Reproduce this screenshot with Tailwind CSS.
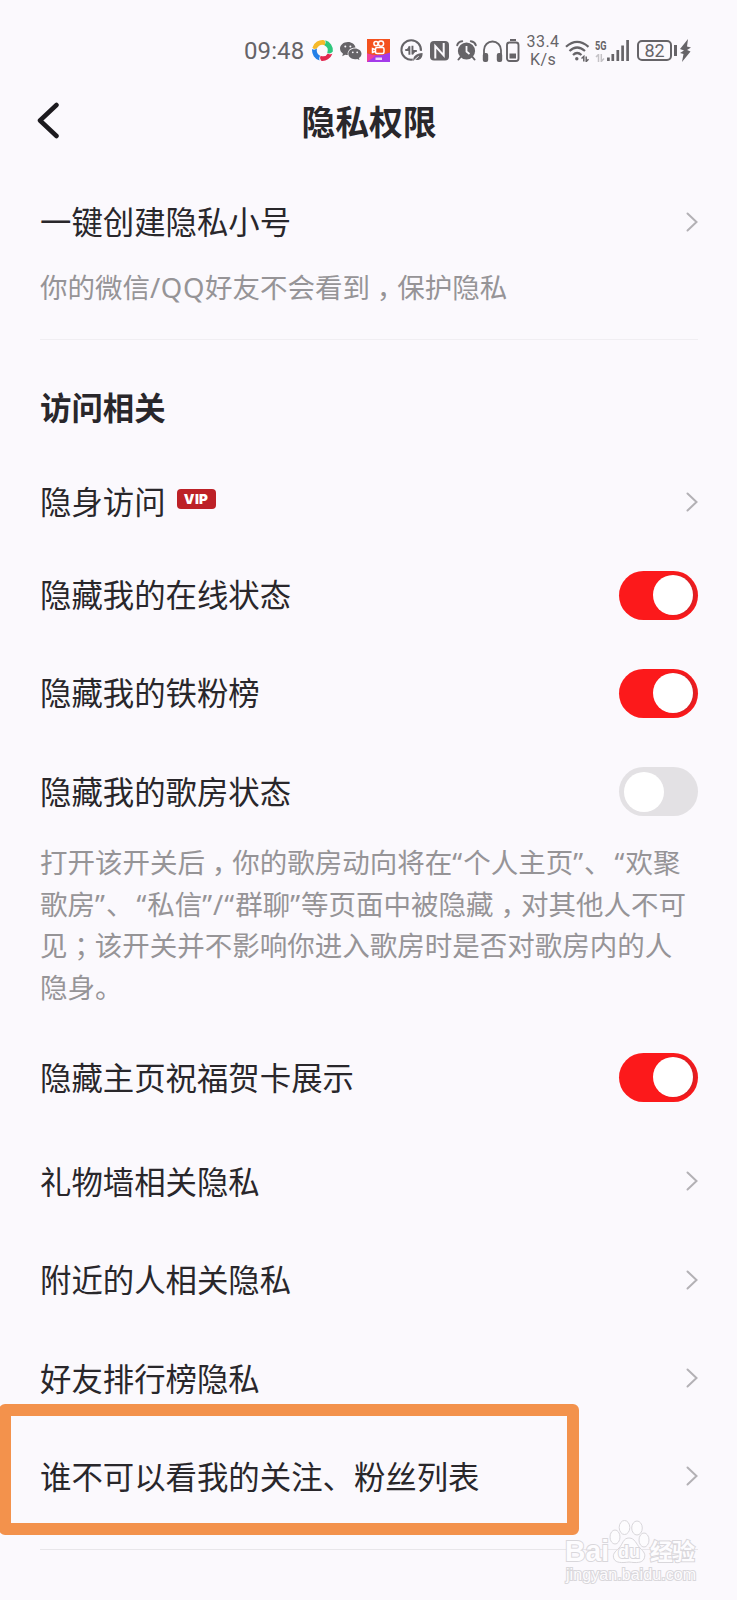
<!DOCTYPE html>
<html lang="zh-CN">
<head>
    <meta charset="UTF-8">
    <meta name="viewport" content="width=device-width, initial-scale=1.0">
    <title>隐私权限</title>
    <script src="https://cdn.jsdelivr.net/npm/@tailwindcss/browser@4"></script>
</head>
<body class="bg-[#fbf9fd]">
    <div class="relative w-[737px] h-[1600px] overflow-hidden bg-[#fbf9fd] text-[#29272b] font-['Noto_Sans','Noto_Sans_CJK_SC',sans-serif] whitespace-nowrap">
        <!-- Status bar -->
        <div class="flex items-center h-[101px] pl-[244px] text-[#666468] font-[Roboto,sans-serif]">
            <span class="w-[67px] text-[24px] leading-6 tracking-[0.1px]">09:48</span>
            <svg class="w-[23px] h-[23px] shrink-0" viewBox="0 0 24 24">
                <path d="M1.500 9A11 11 0 0 1 14 1.200Q15.500 4 14.500 6.500Q9 4.500 6 10Q3 11 1.500 9z" fill="#f5b92a"/>
                <path d="M15 1.400A11 11 0 0 1 22.800 13Q20 16 17 14.500Q19 9 14 6.500Q16 4 15 1.400z" fill="#2fc77d"/>
                <path d="M22.300 15.500A11 11 0 0 1 10.500 22.800Q8.500 20 10 17.500Q15 19.500 17.500 15Q20 16.500 22.300 15.500z" fill="#e2284f"/>
                <path d="M9 22.500A11 11 0 0 1 1.200 10.500Q3.500 12 6.300 10Q5 15 9.500 17.500Q8 20 9 22.500z" fill="#2380e8"/>
            </svg>
            <svg class="w-[22px] h-[18px] ml-[6px] shrink-0" viewBox="0 0 22 18" fill="currentColor">
                <path d="M8 0C3.500 0 0 2.900 0 6.600c0 2.100 1.200 3.900 3 5.100l-.8 2.500 3-1.500c.9.2 1.700.3 2.600.3C7 9 10 5.600 15.500 5.500 14.800 2.300 11.800 0 8 0z"/>
                <path d="M15 6.400c-3.800 0-6.700 2.400-6.700 5.400s2.900 5.400 6.700 5.400c.8 0 1.500-.1 2.200-.3l2.300 1.100-.6-1.900c1.600-1 2.600-2.500 2.600-4.300 0-3-2.900-5.400-6.500-5.400z"/>
                <g fill="#fbf9fd"><circle cx="5.300" cy="4.600" r="1"/><circle cx="10.400" cy="4.600" r="1"/><circle cx="12.800" cy="10.300" r=".9"/><circle cx="17.200" cy="10.300" r=".9"/></g>
            </svg>
            <svg class="w-[23px] h-[23px] ml-[5px] shrink-0" viewBox="0 0 23 23">
                <path d="M0 0h23v23H0z" fill="#f4511e"/>
                <path d="M0 14.500q11.500 4 23-1V23H0z" fill="#a43bea"/>
                <path d="M0 14.500q5 2 9 2L0 23z" fill="#f0409a"/>
                <g fill="none" stroke="#fff" stroke-width="1.500"><circle cx="9" cy="4.600" r="2.100"/><circle cx="14" cy="4.600" r="2.600"/><rect x="8.500" y="8.400" width="8.500" height="6" rx="1.500"/><path d="M8 10.500l-2.500-1v4l2.500-1"/></g>
                <path d="M8.500 18.500h6.500v2.500H8.500z" fill="#fff" opacity=".8"/>
            </svg>
            <svg class="w-[23px] h-[23px] ml-[10px] shrink-0" viewBox="0 0 24 24" fill="none" stroke="currentColor" stroke-width="2.100">
                <path d="M21.800 12.500a10.200 10.200 0 1 0-8.500 9"/>
                <path d="M5.500 11.500h4.300V7.500v9M13 7v9.300M13 12.500h4.500" stroke-width="2"/>
                <path d="M6 12l4-5v5zM13 16.500V12h4.500z" fill="currentColor" stroke="none"/>
                <path d="M14 23c-1-5 3-8 9.500-8.500.5 5-3 8.500-8 7z" fill="currentColor" stroke="none"/>
                <path d="M15 22l4.500-4" stroke="#fbf9fd" stroke-width="1"/>
            </svg>
            <svg class="w-[19px] h-[20px] ml-[7px] shrink-0" viewBox="0 0 19 20">
                <rect width="19" height="19.500" rx="4" fill="currentColor"/>
                <path d="M5.300 17.500V5.200L13.700 14.500V2" fill="none" stroke="#fbf9fd" stroke-width="2"/>
            </svg>
            <svg class="w-[21px] h-[21px] ml-[7px] shrink-0" viewBox="0 0 21 21">
                <g fill="none" stroke="currentColor" stroke-width="2" stroke-linecap="round"><path d="M1.200 5.200q1-3.500 5-4M19.800 5.200q-1-3.500-5-4M4.500 17l-2 2.500M16.500 17l2 2.500"/></g>
                <circle cx="10.500" cy="11" r="8.600" fill="currentColor"/>
                <path d="M10.500 6v5.500l3 2.500" fill="none" stroke="#fbf9fd" stroke-width="1.800"/>
            </svg>
            <svg class="w-[21px] h-[22px] ml-[5px] shrink-0" viewBox="0 0 21 22">
                <path d="M2 16V10a8.500 8.500 0 0 1 17 0v6" fill="none" stroke="currentColor" stroke-width="1.800"/>
                <rect x=".8" y="13" width="5.400" height="9" rx="2" fill="currentColor"/><rect x="14.800" y="13" width="5.400" height="9" rx="2" fill="currentColor"/>
            </svg>
            <svg class="w-[14px] h-[23px] ml-[3px] shrink-0" viewBox="0 0 14 23">
                <path d="M4 0h6v2H4z" fill="currentColor"/>
                <rect x="1" y="3.500" width="11.500" height="18.500" rx="2.500" fill="none" stroke="currentColor" stroke-width="1.900"/>
                <path d="M3.500 14.500h6.500v5H3.500z" fill="currentColor"/>
            </svg>
            <div class="w-[34px] ml-[6px] text-center text-[16px] leading-[18px] tracking-[0.4px]">33.4<br>K/s</div>
            <svg class="w-[25px] h-[22px] ml-[5px] shrink-0" viewBox="0 0 25 22" fill="none" stroke="currentColor" stroke-width="2.200">
                <path d="M1 6.800Q12 -3 23.500 6.800M4.500 11Q12 4 20 11M8 15q4-4 8.500 0"/>
                <circle cx="11.800" cy="18.700" r="1.700" fill="currentColor" stroke="none"/>
                <path d="M16.500 18.500l2.300-2v5M21.200 16.500v5l2.300-2.300" stroke-width="1.500"/>
            </svg>
            <div class="ml-[5px] w-[12px] h-[22px] shrink-0">
                <svg class="block w-[12px] h-[11px]" viewBox="0 0 12 11" fill="currentColor"><text x="0" y="9.500" font-size="12" font-weight="700" textLength="11.500" lengthAdjust="spacingAndGlyphs">5G</text></svg>
                <svg class="block w-[10px] h-[8px] mt-[3px]" viewBox="0 0 10 8" fill="none" stroke="#c5c3c7" stroke-width="1.500"><path d="M1 3l2.500-2.500V8M6.300 0v7.500L9 4.500"/></svg>
            </div>
            <svg class="w-[23px] h-[21px] shrink-0" viewBox="0 0 23 21" stroke="currentColor" stroke-width="2.700">
                <path d="M1.400 17.500V21M5.800 14V21M10.800 10V21M15.600 5.500V21M20.600 0V21"/>
            </svg>
            <div class="w-[35px] h-[21px] ml-[7px] shrink-0 border-2 border-[#666468] rounded-[5px] flex items-center justify-center text-[18px] leading-none">82</div>
            <div class="w-[3px] h-[11px] ml-[2px] shrink-0 bg-[#666468]"></div>
            <svg class="w-[11px] h-[23px] ml-[3px] shrink-0" viewBox="0 0 11 23" fill="currentColor"><path d="M8 0L0 10l4 1.500L0 14l3.500 1L2 23 10.500 12.500 7 11l4-2.500-4-1z"/></svg>
        </div>

        <!-- Header -->
        <div class="relative flex items-center justify-center h-[42px] pl-[1px]">
            <svg class="absolute left-[36px] top-0 w-[24px] h-[38px]" viewBox="0 0 24 38" fill="none" stroke="#1c1a1e" stroke-width="4.500" stroke-linecap="round" stroke-linejoin="round"><path d="M20.500 4L4 19.500 20.500 35"/></svg>
            <h1 class="text-[33.8px] leading-[42px] font-bold">隐私权限</h1>
        </div>

        <!-- Settings list -->
        <div class="pl-[40px] pr-[39px] text-[31.4px]">
            <div class="flex items-center justify-between h-[62px] mt-[48px]">
                <span>一键创建隐私小号</span>
                <svg class="w-[12px] h-[20px]" viewBox="0 0 12 20" fill="none" stroke="#b3b1b5" stroke-width="2" stroke-linecap="round"><path d="M1.500 1.500L10.500 10 1.500 18.500"/></svg>
            </div>
            <p class="h-[42px] mt-[14px] text-[27.5px] leading-[42px] text-[#969497]">你的微信<span class="tracking-[0.6px]">/QQ</span>好友不会看到<span class="px-[6.8px] [font-feature-settings:'halt']">，</span>保护隐私</p>
            <div class="h-px mt-[30px] bg-[#f0eef2]"></div>

            <h2 class="h-[48px] mt-[44px] leading-[48px] font-bold">访问相关</h2>
            <div class="flex items-center h-[89px] mt-[25px]">
                <span>隐身访问</span>
                <span class="w-[39px] h-[20px] ml-[11px] mb-[5px] rounded-[4px] bg-[#bd2127] text-white text-[13.5px] leading-[20px] font-black text-center tracking-[0.3px] font-[Inter,sans-serif]">VIP</span>
                <svg class="w-[12px] h-[20px] ml-auto" viewBox="0 0 12 20" fill="none" stroke="#b3b1b5" stroke-width="2" stroke-linecap="round"><path d="M1.500 1.500L10.500 10 1.500 18.500"/></svg>
            </div>
            <div class="flex items-center justify-between h-[98px]">
                <span>隐藏我的在线状态</span>
                <span class="flex justify-end items-center w-[79px] h-[49px] px-[5px] overflow-hidden rounded-full bg-[#fc191b]"><i class="size-[40px] rounded-full bg-white shadow-[3px_0_3px_rgba(110,60,70,0.25)]"></i></span>
            </div>
            <div class="flex items-center justify-between h-[98px]">
                <span>隐藏我的铁粉榜</span>
                <span class="flex justify-end items-center w-[79px] h-[49px] px-[5px] overflow-hidden rounded-full bg-[#fc191b]"><i class="size-[40px] rounded-full bg-white shadow-[3px_0_3px_rgba(110,60,70,0.25)]"></i></span>
            </div>
            <div class="flex items-center justify-between h-[99px]">
                <span>隐藏我的歌房状态</span>
                <span class="flex items-center w-[79px] h-[49px] px-[5px] rounded-full bg-[#e3e1e4]"><i class="size-[40px] rounded-full bg-white"></i></span>
            </div>
            <p class="mt-px text-[27.5px] leading-[41.6px] text-[#969497]">
                打开该开关后<span class="px-[6.8px] [font-feature-settings:'halt']">，</span>你的歌房动向将在<span class="tracking-[1px]">“</span>个人主页<span class="tracking-[1px]">”</span>、<span class="ml-[3px] tracking-[1px]">“</span>欢聚<br>
                歌房<span class="tracking-[1px]">”</span>、<span class="ml-[3px] tracking-[1px]">“</span>私信<span class="tracking-[1px]">”/“</span>群聊<span class="tracking-[1px]">”</span>等页面中被隐藏<span class="px-[6.8px] [font-feature-settings:'halt']">，</span>对其他人不可<br>
                见<span class="px-[6.8px] [font-feature-settings:'halt']">；</span>该开关并不影响你进入歌房时是否对歌房内的人<br>
                隐身。
            </p>
            <div class="flex items-center justify-between h-[98px] mt-[20px]">
                <span class="pt-px">隐藏主页祝福贺卡展示</span>
                <span class="flex justify-end items-center w-[79px] h-[49px] px-[5px] overflow-hidden rounded-full bg-[#fc191b]"><i class="size-[40px] rounded-full bg-white shadow-[3px_0_3px_rgba(110,60,70,0.25)]"></i></span>
            </div>
            <div class="flex items-center justify-between h-[98px] mt-[6px]">
                <span>礼物墙相关隐私</span>
                <svg class="w-[12px] h-[20px]" viewBox="0 0 12 20" fill="none" stroke="#b3b1b5" stroke-width="2" stroke-linecap="round"><path d="M1.500 1.500L10.500 10 1.500 18.500"/></svg>
            </div>
            <div class="flex items-center justify-between h-[99px]">
                <span>附近的人相关隐私</span>
                <svg class="w-[12px] h-[20px]" viewBox="0 0 12 20" fill="none" stroke="#b3b1b5" stroke-width="2" stroke-linecap="round"><path d="M1.500 1.500L10.500 10 1.500 18.500"/></svg>
            </div>
            <div class="flex items-center justify-between h-[98px]">
                <span>好友排行榜隐私</span>
                <svg class="w-[12px] h-[20px]" viewBox="0 0 12 20" fill="none" stroke="#b3b1b5" stroke-width="2" stroke-linecap="round"><path d="M1.500 1.500L10.500 10 1.500 18.500"/></svg>
            </div>
            <div class="flex items-center justify-between h-[98px]">
                <span>谁不可以看我的关注、粉丝列表</span>
                <svg class="w-[12px] h-[20px]" viewBox="0 0 12 20" fill="none" stroke="#b3b1b5" stroke-width="2" stroke-linecap="round"><path d="M1.500 1.500L10.500 10 1.500 18.500"/></svg>
            </div>
            <div class="h-px mt-[24px] bg-[#e8e6ea]"></div>
        </div>

        <!-- Highlight frame -->
        <div class="absolute left-[-1px] top-[1404px] w-[580px] h-[131px] border-[12px] border-[#f3924c] rounded-[6px]"></div>

        <!-- Watermark -->
        <svg class="absolute left-[560px] top-[1515px] w-[145px] h-[75px]" viewBox="0 0 145 75" fill="#fdfcfe" stroke="#d9d7db" stroke-width="1">
            <ellipse cx="55" cy="22" rx="5" ry="7"/>
            <ellipse cx="64.500" cy="12.500" rx="5.300" ry="7"/>
            <ellipse cx="77" cy="13" rx="5.300" ry="7"/>
            <ellipse cx="84" cy="25" rx="5" ry="7"/>
            <path d="M69 23c6 0 7 6 11 10s6 6 4 11c-2 4-8 4-15 3-7 1-13 1-15-3-2-5 1-7 5-11s4-10 10-10z"/>
            <g class="font-['Liberation_Sans','Noto_Sans_CJK_SC',sans-serif]" paint-order="stroke" stroke-width="2">
                <text class="font-bold" x="5" y="46" font-size="30" textLength="44" lengthAdjust="spacingAndGlyphs">Bai</text>
                <text class="font-bold" x="58" y="43" font-size="19" textLength="22" lengthAdjust="spacingAndGlyphs">du</text>
                <text class="font-bold" x="90" y="45" font-size="23" textLength="45">经验</text>
                <text x="6" y="65" font-size="16" textLength="130">jingyan.baidu.com</text>
            </g>
        </svg>
    </div>
</body>
</html>
